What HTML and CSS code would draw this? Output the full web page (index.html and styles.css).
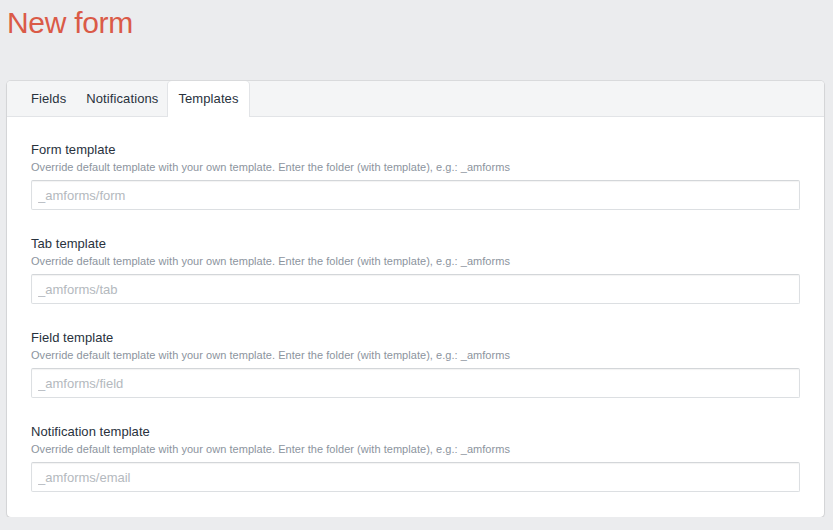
FILE: index.html
```html
<!DOCTYPE html>
<html>
<head>
<meta charset="utf-8">
<link rel="stylesheet" href="styles.css">
</head>
<body>
<h1 class="title">New form</h1>
<div class="card">
  <div class="tabs">
    <span class="tab">Fields</span>
    <span class="tab">Notifications</span>
    <span class="tab active">Templates</span>
  </div>
  <div class="body">
    <div class="field">
      <div class="label">Form template</div>
      <div class="hint">Override default template with your own template. Enter the folder (with template), e.g.: _amforms</div>
      <input class="input" type="text" placeholder="_amforms/form">
    </div>
    <div class="field">
      <div class="label">Tab template</div>
      <div class="hint">Override default template with your own template. Enter the folder (with template), e.g.: _amforms</div>
      <input class="input" type="text" placeholder="_amforms/tab">
    </div>
    <div class="field">
      <div class="label">Field template</div>
      <div class="hint">Override default template with your own template. Enter the folder (with template), e.g.: _amforms</div>
      <input class="input" type="text" placeholder="_amforms/field">
    </div>
    <div class="field">
      <div class="label">Notification template</div>
      <div class="hint">Override default template with your own template. Enter the folder (with template), e.g.: _amforms</div>
      <input class="input" type="text" placeholder="_amforms/email">
    </div>
  </div>
</div>
</body>
</html>
```
FILE: styles.css
```css
html, body {
  margin: 0;
  padding: 0;
  background: #ebecee;
  font-family: "Liberation Sans", Arial, sans-serif;
  color: #29323d;
}
body {
  padding: 0 9px 0 7px;
}
.title {
  margin: 0;
  padding-top: 4px;
  height: 77px;
  font-size: 30px;
  font-weight: normal;
  color: #da5a47;
  line-height: 38px;
  letter-spacing: -0.3px;
}
.card {
  background: #fff;
  border-radius: 4px;
  box-shadow: 0 0 0 1px rgba(0,0,0,0.07), 0 1px 2px rgba(0,0,0,0.1);
  overflow: hidden;
  height: 436px;
}
.tabs {
  display: flex;
  height: 35px;
  background: #f4f5f6;
  border-bottom: 1px solid #e2e4e7;
  padding-left: 14px;
}
.tab {
  padding: 0 10px;
  font-size: 13px;
  line-height: 35px;
  letter-spacing: 0.1px;
  color: #29323d;
}
.tab.active {
  background: #fff;
  height: 36px;
  border-radius: 4px 4px 0 0;
  box-shadow: 1px 0 0 #e2e4e7, -1px 0 0 #e2e4e7;
}
.body {
  padding: 24px 24px 0 24px;
}
.field {
  height: 94px;
}
.label {
  font-size: 13px;
  line-height: 18px;
  letter-spacing: 0.05px;
  color: #29323d;
}
.hint {
  font-size: 11px;
  line-height: 14px;
  margin-top: 1px;
  letter-spacing: 0.04px;
  color: #8c949e;
}
.input {
  display: block;
  box-sizing: border-box;
  margin-top: 6px;
  width: 769px;
  height: 30px;
  border: 1px solid #dcdfe2;
  border-top-color: #d3d6d9;
  border-radius: 2px;
  box-shadow: inset 0 1px 1px rgba(0,0,0,0.05);
  padding: 0 6px;
  font-family: "Liberation Sans", Arial, sans-serif;
  font-size: 13px;
  color: #29323d;
  background: #fff;
}
.input::placeholder {
  color: #b4b9be;
}
```
